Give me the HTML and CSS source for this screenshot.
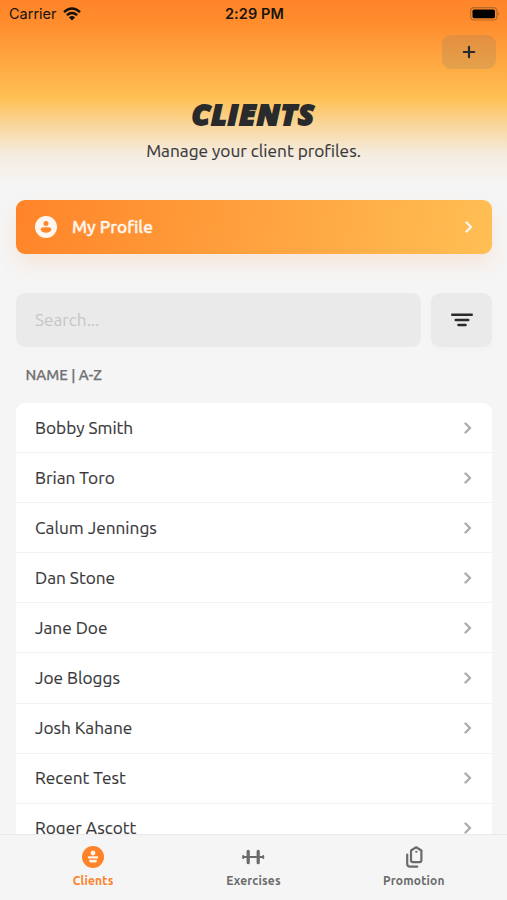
FILE: index.html
```html
<!DOCTYPE html>
<html lang="en">
<head>
<meta charset="utf-8">
<title>Clients</title>
<link rel="stylesheet" href="styles.css">
</head>
<body>
<div class="app">
  <header class="hero">
    <div class="status">
      <div class="carrier"><span>Carrier</span>
        <svg width="18" height="14" viewBox="0 0 18 14" fill="none" stroke="#111" stroke-width="2.5"><path d="M1 5.1Q9-2 17 5.1M3.9 8.1Q9 3.8 14.1 8.1"/><path d="M5.9 10.2Q9 7.8 12.1 10.2L9 13.4Z" fill="#111" stroke="none"/></svg>
      </div>
      <span class="time">2:29 PM</span>
      <svg class="battery" width="31" height="14" viewBox="0 0 31 14"><rect x="1.6" y=".6" width="26.3" height="12.4" rx="3.5" fill="none" stroke="#b56a26" stroke-width="1.2"/><rect x="3.5" y="2.5" width="22.5" height="8.7" rx="1.8"/><path d="M29 4.7Q31 6.8 29 8.9Z" fill="#b56a26"/></svg>
    </div>
    <button class="add" aria-label="Add client"><svg width="14" height="14" viewBox="0 0 14 14" stroke="#292a2c" stroke-width="2.2" stroke-linecap="round"><path d="M7 1.8v10.4M1.8 7h10.4"/></svg></button>
    <h1>CLIENTS</h1>
    <p>Manage your client profiles.</p>
  </header>
  <main>
    <a class="profile">
      <svg width="22" height="22" viewBox="0 0 22 22"><circle cx="11" cy="11" r="11" fill="#fff7ef"/><circle cx="11" cy="7.4" r="2.5" fill="#ff892c"/><path d="M5.6 13.6Q5.8 11.2 8.3 11.2H13.7Q16.2 11.2 16.4 13.6Q15.2 16.8 11 16.8Q6.800 16.8 5.6 13.6Z" fill="#ff892c"/></svg>
      <span>My Profile</span>
      <svg class="chev" width="8" height="12" viewBox="0 0 8 12"><path d="M1.5 1.5 6 6 1.5 10.5"/></svg>
    </a>
    <div class="tools">
      <input type="text" placeholder="Search..." aria-label="Search">
      <button class="filter" aria-label="Sort"><svg width="22" height="14" viewBox="0 0 22 14" stroke="#292a2c" stroke-width="2.6" stroke-linecap="round"><path d="M1.3 1.8H20.7M4.8 7H17.2M7.5 12H14.5"/></svg></button>
    </div>
    <h2>NAME | A-Z</h2>
    <ul class="list">
      <li><span>Bobby Smith</span><svg class="chev" width="8" height="12" viewBox="0 0 8 12"><path d="M1.5 1.5 6 6 1.5 10.5"/></svg></li>
      <li><span>Brian Toro</span><svg class="chev" width="8" height="12" viewBox="0 0 8 12"><path d="M1.5 1.5 6 6 1.5 10.5"/></svg></li>
      <li><span>Calum Jennings</span><svg class="chev" width="8" height="12" viewBox="0 0 8 12"><path d="M1.5 1.5 6 6 1.5 10.5"/></svg></li>
      <li><span>Dan Stone</span><svg class="chev" width="8" height="12" viewBox="0 0 8 12"><path d="M1.5 1.5 6 6 1.5 10.5"/></svg></li>
      <li><span>Jane Doe</span><svg class="chev" width="8" height="12" viewBox="0 0 8 12"><path d="M1.5 1.5 6 6 1.5 10.5"/></svg></li>
      <li><span>Joe Bloggs</span><svg class="chev" width="8" height="12" viewBox="0 0 8 12"><path d="M1.5 1.5 6 6 1.5 10.5"/></svg></li>
      <li><span>Josh Kahane</span><svg class="chev" width="8" height="12" viewBox="0 0 8 12"><path d="M1.5 1.5 6 6 1.5 10.5"/></svg></li>
      <li><span>Recent Test</span><svg class="chev" width="8" height="12" viewBox="0 0 8 12"><path d="M1.5 1.5 6 6 1.5 10.5"/></svg></li>
      <li><span>Roger Ascott</span><svg class="chev" width="8" height="12" viewBox="0 0 8 12"><path d="M1.5 1.5 6 6 1.5 10.5"/></svg></li>
    </ul>
  </main>
  <nav>
    <a class="active"><svg width="24" height="24" viewBox="0 0 24 24"><circle cx="12" cy="12" r="11" fill="#ff8128"/><g fill="#fff3e8"><circle cx="12" cy="8" r="2.4"/><rect x="6.8" y="11.2" width="10.4" height="2.2" rx="1"/><path d="M8 14.7h8L15.3 17.5H8.7Z"/></g></svg><span>Clients</span></a>
    <a><svg width="24" height="24" viewBox="0 0 24 24" stroke="#6b6b6b" fill="none" stroke-linecap="round"><path d="M7.2 6.3v11.4M17.2 6.3v11.4" stroke-width="3.2"/><path d="M8 12h8M2.200 11v2M22.2 11v2M2.500 12h4M18 12h4" stroke-width="2"/></svg><span>Exercises</span></a>
    <a><svg width="24" height="24" viewBox="0 0 24 24" stroke="#6b6b6b" fill="none" stroke-width="2.2" stroke-linejoin="round" stroke-linecap="round"><path d="M9 5.500 14.200 2.300 19.400 5.500V15.300q0 1.900-1.900 1.900H10.900Q9 17.200 9 15.300Z"/><circle cx="14.200" cy="6.800" r=".7" stroke-width="1"/><path d="M5.200 9.500v9.200q0 3 3 3h7"/></svg><span>Promotion</span></a>
  </nav>
</div>
</body>
</html>
```
FILE: styles.css
```css
* { box-sizing: border-box; margin: 0; padding: 0; }
body { font-family: "Ubuntu", "Noto Sans", sans-serif; color: #38383a; background: #f5f5f5; }
svg { display: block; flex: none; }
button, input { border: 0; font: inherit; }
.app { height: 900px; display: flex; flex-direction: column; overflow: hidden; }
.hero { height: 200px; flex: none; display: flex; flex-direction: column; align-items: center; background: linear-gradient(#ff8429 0, #ff8c2d 22px, #ffc053 98px, #f9d69b 125px, #f5ecdf 154px, #f5f5f5 185px); }
.status { width: 100%; height: 27px; padding: 0 7px 0 9px; display: grid; grid-template-columns: 1fr auto 1fr; align-items: center; font-family: Inter, sans-serif; font-size: 14.5px; color: #16130f; }
.carrier { display: flex; align-items: center; gap: 6px; }
.time { font-weight: 600; letter-spacing: .1px; }
.battery { justify-self: end; }
.add { align-self: flex-end; margin: 8px 11px 0 0; width: 54px; height: 34px; border-radius: 9px; background: rgba(120, 120, 110, .2); display: grid; place-items: center; }
h1 { margin-top: 26px; height: 38px; font: italic 800 29px/38px "Open Sans", sans-serif; letter-spacing: 1.2px; color: #292a2c; -webkit-text-stroke: 1.8px #292a2c; }
.hero p { margin-top: 6px; font-size: 17.25px; line-height: 24px; }
main { flex: 1; min-height: 0; overflow: hidden; padding: 0 15px 0 16px; }
.app main { display: flex; flex-direction: column; margin-top: -10px; padding-top: 10px; }
.profile { flex: none; height: 54px; padding: 0 19px; border-radius: 9px; display: flex; align-items: center; gap: 15px; color: #fff7ef; font-size: 17.2px; font-weight: 500; background: linear-gradient(100deg, #ff8429, #ffbf54); box-shadow: 0 10px 20px rgba(255, 132, 41, .13); }
.profile span { margin-bottom: 2px; -webkit-text-stroke: .4px; }
.chev { margin-left: auto; fill: none; stroke: #adadad; stroke-width: 2.4; stroke-linecap: round; stroke-linejoin: round; }
.profile .chev { stroke: #fff7ef; }
.tools { flex: none; display: flex; gap: 10px; height: 54px; margin-top: 39px; }
.tools input { flex: 1; min-width: 0; border-radius: 9px; padding: 0 19px 2px; background: #eaeaea; font-size: 17.2px; }
.tools input::placeholder { color: #c6c6c6; opacity: 1; }
.filter { width: 61px; border-radius: 9px; background: #eaeaea; display: grid; place-items: center; box-shadow: 0 4px 10px rgba(0, 0, 0, .015); }
h2 { flex: none; margin: 17px 0 0 9.5px; font-size: 14.8px; line-height: 22px; font-weight: 500; color: #727272; -webkit-text-stroke: .25px; }
.list { list-style: none; margin-top: 17px; border-radius: 9px 9px 0 0; overflow: hidden; background: #fff; }
.list li { height: 50.1px; padding: 0 20px 0 19px; display: flex; align-items: center; border-bottom: 1px solid #f2f2f2; font-size: 17.25px; }
.hero p, .list span { -webkit-text-stroke: .15px; }
.list span { margin-bottom: 1px; }
nav { flex: none; height: 66px; border-top: 1px solid #e9e9e9; padding: 0 13px; display: grid; grid-template-columns: repeat(3, 1fr); background: #f5f5f5; }
nav a { display: flex; flex-direction: column; align-items: center; padding-top: 10px; color: #6b6b6b; font-size: 12px; font-weight: 700; line-height: 16px; letter-spacing: .2px; }
nav span { margin-top: 4px; }
nav .active { color: #ff8128; }
```
